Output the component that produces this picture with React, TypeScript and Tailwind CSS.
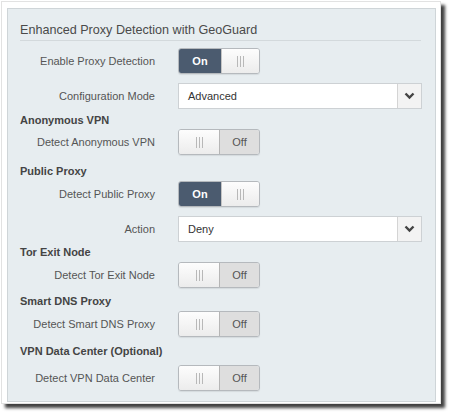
import React from "react";

function Grip() {
  return (
    <div className="flex gap-[2px] h-[11px]">
      <div className="w-px bg-[#b8b8b8]" />
      <div className="w-px bg-[#b8b8b8]" />
      <div className="w-px bg-[#b8b8b8]" />
    </div>
  );
}

function Toggle({ on }: { on: boolean }) {
  return (
    <div className="flex h-[26px] w-[82px] rounded-[3px] border border-[#b5b9bd] overflow-hidden shadow-[0_1px_1px_rgba(0,0,0,0.08)]">
      {on ? (
        <>
          <div className="w-[42px] flex items-center justify-center bg-[#4b5b6f] text-white font-bold text-[11px]">On</div>
          <div className="flex-1 flex items-center justify-center bg-gradient-to-b from-[#fdfdfd] to-[#ececec] border-l border-[#c4c4c4]">
            <Grip />
          </div>
        </>
      ) : (
        <>
          <div className="w-[40px] flex items-center justify-center bg-gradient-to-b from-[#fdfdfd] to-[#ececec]">
            <Grip />
          </div>
          <div className="flex-1 flex items-center justify-center bg-[#dedede] border-l border-[#b5b5b5] text-[#555] text-[11px]">Off</div>
        </>
      )}
    </div>
  );
}

function Select({ value }: { value: string }) {
  return (
    <div className="flex h-[26px] w-[244px] border border-[#cdd1d4] bg-white">
      <div className="flex-1 flex items-center pl-[9px] text-[11px] text-[#333]">{value}</div>
      <div className="w-[24px] flex items-center justify-center bg-[#f3f3f3] border-l border-[#d4d4d4]">
        <svg width="11" height="8" viewBox="0 0 11 8">
          <path d="M1.5 1.5 L5.5 5.5 L9.5 1.5" fill="none" stroke="#444" strokeWidth="2.4" />
        </svg>
      </div>
    </div>
  );
}

function Row({ label, children, mt }: { label: string; children: React.ReactNode; mt: string }) {
  return (
    <div className={`flex items-center ${mt}`}>
      <div className="w-[135px] text-right text-[11px] text-[#555]">{label}</div>
      <div className="ml-[23px]">{children}</div>
    </div>
  );
}

function Heading({ text, mt }: { text: string; mt: string }) {
  return <div className={`h-[14px] leading-[14px] text-[11px] font-bold text-[#444] ${mt}`}>{text}</div>;
}

export default function App() {
  return (
    <div className="w-[450px] h-[415px] bg-white pt-px pl-px" style={{ fontFamily: '"Liberation Sans", Arial, sans-serif' }}>
      <div className="w-[440px] h-[403px] bg-white border border-[#e2e2e2] shadow-[4px_4px_3px_rgba(0,0,0,0.75)] pt-[6px] pl-[5px]">
        <div className="w-[429px] h-[394px] bg-[#e7edf0] border border-[#cfd5d8] pl-[12px] pt-[13px]">
          <div className="w-[401px] border-b border-[#d3d9dc] pb-[3px] h-[19px] text-[12.6px] leading-[16px] text-[#4a4a4a]">
            Enhanced Proxy Detection with GeoGuard
          </div>
          <Row label="Enable Proxy Detection" mt="mt-[7px]"><Toggle on /></Row>
          <Row label="Configuration Mode" mt="mt-[9px]"><Select value="Advanced" /></Row>
          <Heading text="Anonymous VPN" mt="mt-[4px]" />
          <Row label="Detect Anonymous VPN" mt="mt-[2px]"><Toggle on={false} /></Row>
          <Heading text="Public Proxy" mt="mt-[9px]" />
          <Row label="Detect Public Proxy" mt="mt-[3px]"><Toggle on /></Row>
          <Row label="Action" mt="mt-[9px]"><Select value="Deny" /></Row>
          <Heading text="Tor Exit Node" mt="mt-[3px]" />
          <Row label="Detect Tor Exit Node" mt="mt-[3px]"><Toggle on={false} /></Row>
          <Heading text="Smart DNS Proxy" mt="mt-[6px]" />
          <Row label="Detect Smart DNS Proxy" mt="mt-[3px]"><Toggle on={false} /></Row>
          <Heading text="VPN Data Center (Optional)" mt="mt-[7px]" />
          <Row label="Detect VPN Data Center" mt="mt-[7px]"><Toggle on={false} /></Row>
        </div>
      </div>
    </div>
  );
}
